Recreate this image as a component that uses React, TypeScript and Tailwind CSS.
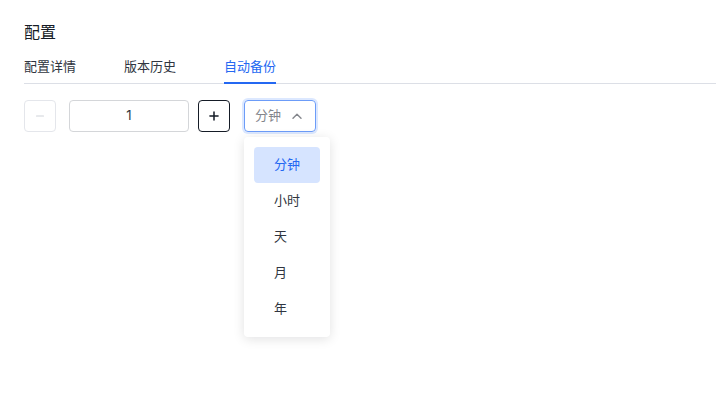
import { Minus, Plus } from 'lucide-react'

const tabs = ['配置详情', '版本历史', '自动备份']
const units = ['分钟', '小时', '天', '月', '年']

export default function App() {
  const font = "font-['Inter','Noto_Sans_CJK_SC',sans-serif]"

  return (
    <div className={`min-h-screen w-full bg-white pl-6 pt-5 ${font}`}>
      <h1 className="text-base leading-6 text-[#151b26]">配置</h1>

      <div className="mt-2 flex gap-12 border-b border-[#dcdfe6]">
        {tabs.map((t, i) => (
          <div
            key={t}
            className={`-mb-px border-b-2 pt-1 pb-1.5 text-[13px] leading-5 ${
              i === 2 ? 'border-[#2468f2] text-[#2468f2]' : 'border-transparent text-[#303540]'
            }`}
          >
            {t}
          </div>
        ))}
      </div>

      <div className="mt-4 flex items-start">
        <button className="flex h-8 w-8 items-center justify-center rounded border border-[#e4e6eb] text-[#d0d3d9]">
          <Minus size={12} strokeWidth={2.2} />
        </button>
        <div className="ml-[13px] flex h-8 w-[120px] items-center justify-center rounded border border-[#d4d6d9] text-[13px] text-[#303540]">
          1
        </div>
        <button className="ml-[9px] flex h-8 w-8 items-center justify-center rounded border border-[#151b26] text-[#151b26]">
          <Plus size={14} strokeWidth={2.6} />
        </button>

        <div className="relative ml-[14px]">
          <div className="flex h-8 w-[72px] items-center justify-between rounded border border-[#6c9cf8] pl-2.5 pr-3 text-[13px] text-[#84868c] shadow-[0_0_0_2px_#dce8ff]">
            <span>分钟</span>
            <svg width="10" height="6" viewBox="0 0 10 6" fill="none" className="mr-px">
              <path d="M1 5.2 5 1.2l4 4" stroke="#84868c" strokeWidth="1.4" strokeLinecap="round" strokeLinejoin="round" />
            </svg>
          </div>

          <div className="absolute top-[37px] left-0 w-[86px] rounded bg-white p-2.5 shadow-[0_2px_12px_rgba(7,12,20,0.12)]">
            {units.map((u, i) => (
              <div
                key={u}
                className={`flex h-9 items-center rounded pl-5 text-[13px] ${
                  i === 0 ? 'bg-[#d6e4ff] text-[#2468f2]' : 'text-[#303540]'
                }`}
              >
                {u}
              </div>
            ))}
          </div>
        </div>
      </div>
    </div>
  )
}
